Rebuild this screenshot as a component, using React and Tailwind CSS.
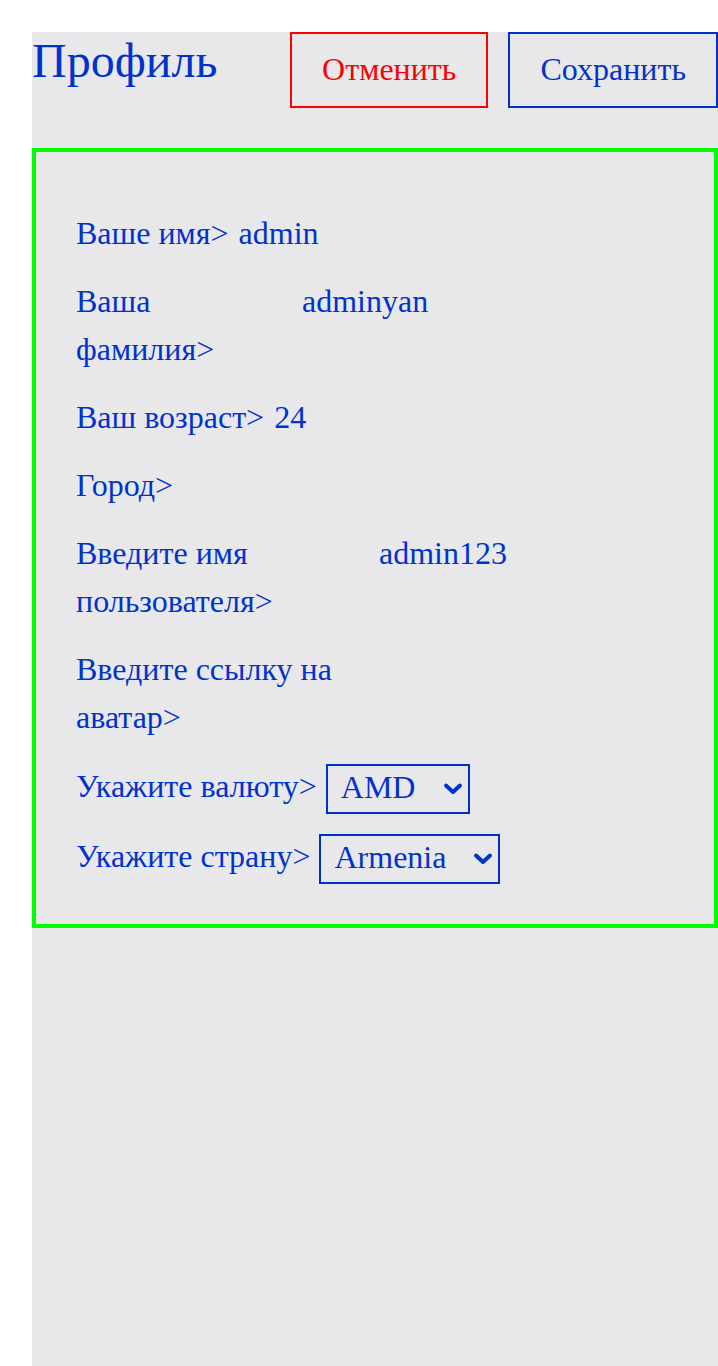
import React from 'react';

const blue = 'text-[#0033cc]';

const Chevron = () => (
  <svg
    className="pointer-events-none absolute right-[7px] top-1/2 -translate-y-1/2"
    width="20"
    height="14"
    viewBox="0 0 20 14"
    fill="none"
  >
    <path d="M3 3.5 L10 10 L17 3.5" stroke="#0033cc" strokeWidth="4" strokeLinecap="round" strokeLinejoin="round" />
  </svg>
);

const Field = ({ label, value, labelClass = '' }) => (
  <div className="flex items-start gap-[10px]">
    <span className={labelClass}>{label}</span>
    {value && <span>{value}</span>}
  </div>
);

const Picker = ({ label, options }) => (
  <div className="flex items-start gap-[9px]">
    <span>{label}</span>
    <div className="relative mt-[2px] flex">
      <select
        defaultValue={options[0]}
        className="appearance-none border-2 border-[#0033cc] bg-transparent pb-[4px] pl-[13px] pr-[52px] pt-0 text-[32px] leading-[42px] text-[#0033cc] outline-none"
        style={{ fontFamily: '"Liberation Serif", serif' }}
      >
        {options.map((o) => (
          <option key={o}>{o}</option>
        ))}
      </select>
      <Chevron />
    </div>
  </div>
);

export default function App() {
  return (
    <div className="min-h-screen bg-white pl-8 pt-8" style={{ fontFamily: '"Liberation Serif", "Times New Roman", serif' }}>
      <div className="min-h-[calc(100vh-2rem)] bg-[#e8e8eb]">
        <div className="flex items-start justify-between">
          <h1 className={`text-[48px] leading-[1.2] ${blue}`}>Профиль</h1>
          <div className="flex gap-5">
            <button className="h-[76px] border-2 border-[#ff0000] px-[30px] pb-[3px] text-[32px] text-[#ff0000]">
              Отменить
            </button>
            <button className={`h-[76px] border-2 border-[#0033cc] px-[30px] pb-[3px] text-[32px] ${blue}`}>
              Сохранить
            </button>
          </div>
        </div>

        <div className={`mt-10 border-4 border-[#00ff00] px-10 pb-10 pt-[57px] text-[32px] leading-[48px] ${blue}`}>
          <div className="flex flex-col gap-5">
            <Field label="Ваше имя>" value="admin" />
            <Field label="Ваша фамилия>" value="adminyan" labelClass="w-[216px]" />
            <Field label="Ваш возраст>" value="24" />
            <Field label="Город>" />
            <Field label="Введите имя пользователя>" value="admin123" labelClass="w-[293px]" />
            <Field label="Введите ссылку на аватар>" labelClass="w-[300px]" />
            <div className="mt-[1px] flex flex-col gap-[18px]">
              <Picker label="Укажите валюту>" options={['AMD', 'USD', 'RUB']} />
              <Picker label="Укажите страну>" options={['Armenia', 'Russia', 'Georgia']} />
            </div>
          </div>
        </div>
      </div>
    </div>
  );
}
